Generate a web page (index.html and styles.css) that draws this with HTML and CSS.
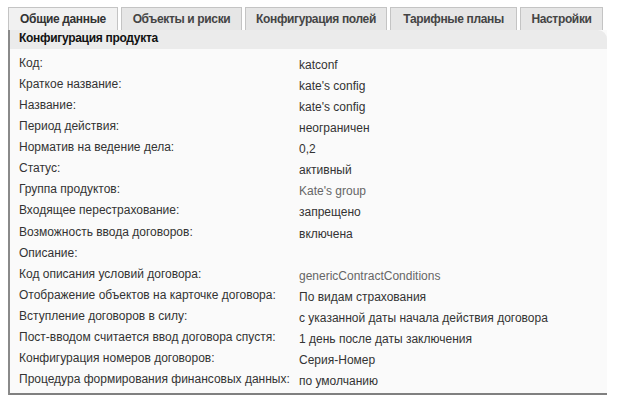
FILE: index.html
```
<!DOCTYPE html>
<html><head><meta charset="utf-8"><link rel="stylesheet" href="styles.css"></head>
<body>
<div class="wrap">
  <div class="tabs">
    <div class="tab active t1">Общие данные</div>
    <div class="tab t2">Объекты и риски</div>
    <div class="tab t3">Конфигурация полей</div>
    <div class="tab t4">Тарифные планы</div>
    <div class="tab t5">Настройки</div>
  </div>
  <div class="panel">
    <div class="head">Конфигурация продукта</div>
    <div class="body">
      <div class="row"><span class="k">Код:</span><span class="v">katconf</span></div>
      <div class="row"><span class="k">Краткое название:</span><span class="v">kate's config</span></div>
      <div class="row"><span class="k">Название:</span><span class="v">kate's config</span></div>
      <div class="row"><span class="k">Период действия:</span><span class="v">неограничен</span></div>
      <div class="row"><span class="k">Норматив на ведение дела:</span><span class="v">0,2</span></div>
      <div class="row"><span class="k">Статус:</span><span class="v">активный</span></div>
      <div class="row"><span class="k">Группа продуктов:</span><span class="v light">Kate's group</span></div>
      <div class="row"><span class="k">Входящее перестрахование:</span><span class="v">запрещено</span></div>
      <div class="row"><span class="k">Возможность ввода договоров:</span><span class="v">включена</span></div>
      <div class="row"><span class="k">Описание:</span><span class="v"></span></div>
      <div class="row"><span class="k">Код описания условий договора:</span><span class="v light">genericContractConditions</span></div>
      <div class="row"><span class="k">Отображение объектов на карточке договора:</span><span class="v">По видам страхования</span></div>
      <div class="row"><span class="k">Вступление договоров в силу:</span><span class="v">с указанной даты начала действия договора</span></div>
      <div class="row"><span class="k">Пост-вводом считается ввод договора спустя:</span><span class="v">1 день после даты заключения</span></div>
      <div class="row"><span class="k">Конфигурация номеров договоров:</span><span class="v">Серия-Номер</span></div>
      <div class="row"><span class="k">Процедура формирования финансовых данных:</span><span class="v">по умолчанию</span></div>
    </div>
  </div>
</div>
</body></html>
```
FILE: styles.css
```
html, body { margin: 0; padding: 0; background: #fff; }
body { font-family: "Liberation Sans", Arial, sans-serif; font-size: 12px; color: #333; }
.wrap { padding: 7px 0 0 8px; width: 599px; }
.tabs { display: flex; gap: 3px; height: 23px; }
.tab {
  box-sizing: border-box;
  height: 23px;
  padding-top: 4px;
  text-align: center;
  border: 1px solid #c4c4c4;
  border-bottom: none;
  background: #e6e6e6;
  font-weight: bold;
  letter-spacing: -0.35px;
  color: #444;
  white-space: nowrap;
}
.t1 { width: 110px; }
.t2 { width: 121px; }
.t3 { width: 142px; }
.t4 { width: 127px; }
.t5 { width: 83px; }
.tab.active { background: #f1f1f1; color: #333; }
.panel { border-left: 2px solid #8a8a8a; border-bottom: 4px solid #808080; background: #fafafa; }
.head {
  height: 19px;
  line-height: 17px;
  padding-left: 9px;
  background: #ebebeb;
  border-top-right-radius: 9px;
  font-weight: bold;
  letter-spacing: -0.3px;
  color: #111;
}
.body { padding: 4px 0 3px 9px; }
.row { display: flex; height: 21.07px; line-height: 21px; }
.k { width: 280px; flex: none; white-space: nowrap; }
.v { padding-top: 2px; white-space: nowrap; }
.light { color: #666; }
```
